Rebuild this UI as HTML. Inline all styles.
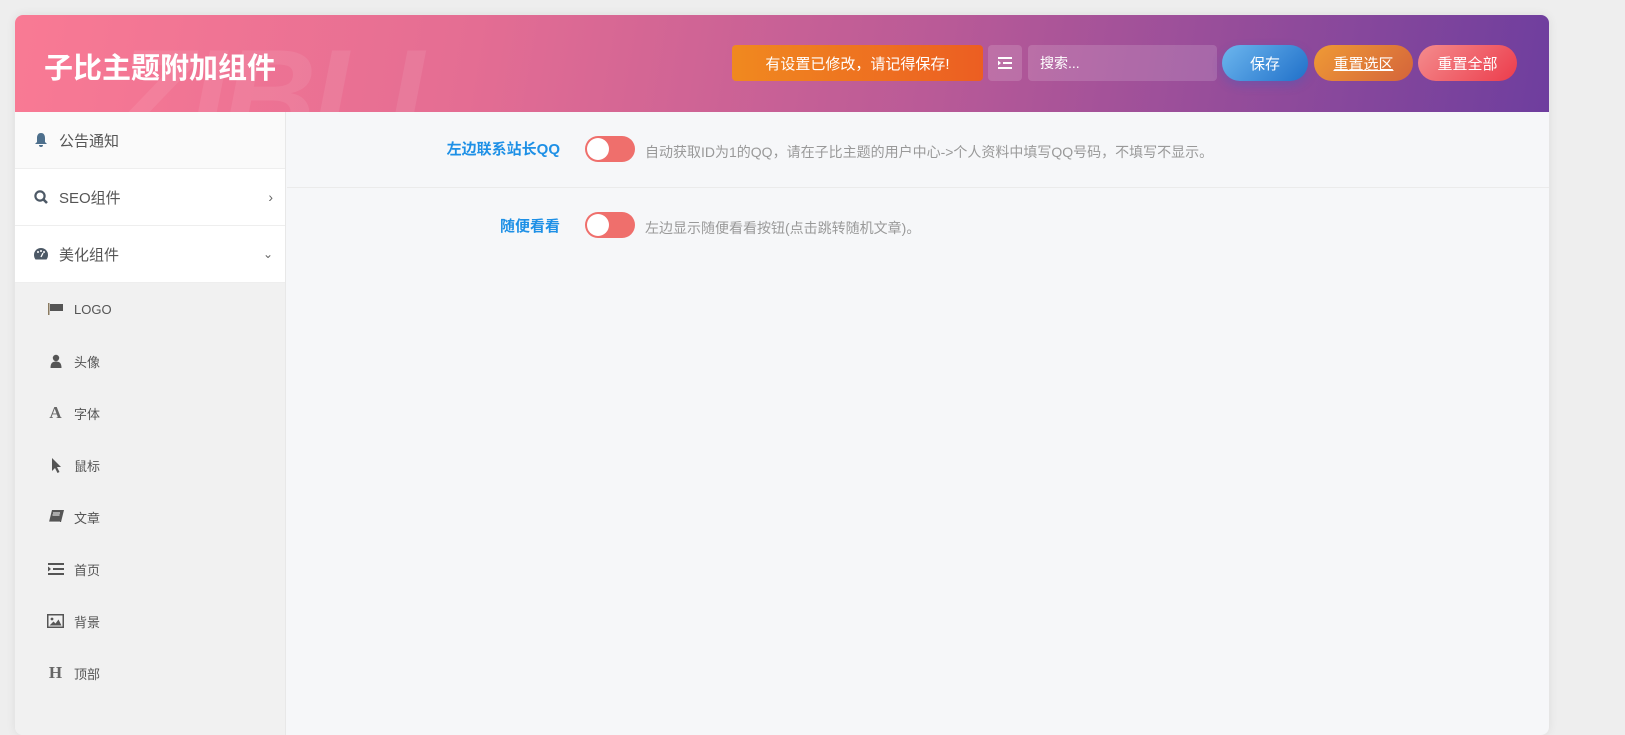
<!DOCTYPE html>
<html><head><meta charset="utf-8"><style>
*{box-sizing:border-box;margin:0;padding:0}
body{width:1625px;height:724px;background:#eeeeee;font-family:"Liberation Sans","Noto Sans CJK SC",sans-serif;overflow:hidden;position:relative}
.wrap{position:absolute;left:15px;top:15px;width:1534px;height:720px;border-radius:8px;overflow:hidden;background:#f6f7f9;box-shadow:0 0 10px rgba(0,0,0,.08)}
.hd{position:absolute;left:0;top:0;width:1534px;height:97px;background:linear-gradient(100deg,#f97a94 0%,#e46d93 30%,#b95a97 60%,#6e3e9e 100%);overflow:hidden}
.hd h1{position:absolute;left:29px;top:30px;color:#fff;font-size:29px;font-weight:bold;letter-spacing:0}
.wm{position:absolute;left:100px;top:5px;font-size:130px;font-weight:900;font-style:italic;color:rgba(255,255,255,.08);letter-spacing:-4px;font-family:"Liberation Sans",sans-serif}
.b{position:absolute;top:30px;height:36px;color:#fff;font-size:15px;display:flex;align-items:center;justify-content:center}
.side{position:absolute;left:0;top:97px;width:271px;height:630px;background:#f1f1f1;border-right:1px solid #e8e8e8}
.it{height:57px;display:flex;align-items:center;padding-left:18px;font-size:15px;color:#555;border-bottom:1px solid #eee;background:#fff;position:relative}
.it svg{margin-right:10px}
.sub{height:52px;display:flex;align-items:center;padding-left:32px;font-size:13px;color:#555}
.sub .ic{width:17px;margin-right:10px;display:flex;justify-content:center;color:#666}
.lab{position:absolute;right:989px;font-size:15px;font-weight:bold;color:#1e90e6}
.tg{position:absolute;left:570px;width:50px;height:26px;border-radius:13px;background:#ef6f6c}
.tg i{position:absolute;left:2px;top:2px;width:22px;height:22px;border-radius:50%;background:#fff}
.ds{position:absolute;left:630px;font-size:14px;color:#999}
</style></head><body>
<div class="wrap">
<div class="hd"><div class="wm">ZIBLL</div><h1>子比主题附加组件</h1>
<div class="b" style="left:717px;width:251px;background:linear-gradient(90deg,#f0891f,#ec5e22);border-radius:4px">有设置已修改，请记得保存!</div>
<div class="b" style="left:973px;width:34px;background:rgba(255,255,255,.15);border-radius:4px"><svg width="14" height="12"><rect x="0" y="0" width="14" height="2" fill="#fff"/><rect x="5" y="5" width="9" height="2" fill="#fff"/><rect x="0" y="10" width="14" height="2" fill="#fff"/><path d="M0 3.5L3 6 0 8.5z" fill="#fff"/></svg></div>
<div class="b" style="left:1013px;width:189px;background:rgba(255,255,255,.15);border-radius:4px;justify-content:flex-start;padding-left:12px;font-size:14px">搜索...</div>
<div class="b" style="left:1207px;width:86px;border-radius:18px;background:linear-gradient(135deg,#6cb6ee,#2070c9);box-shadow:0 4px 10px rgba(40,100,200,.3)">保存</div>
<div class="b" style="left:1299px;width:99px;border-radius:18px;background:linear-gradient(135deg,#ef9a35,#d4643b);text-decoration:underline">重置选区</div>
<div class="b" style="left:1403px;width:99px;border-radius:18px;background:linear-gradient(135deg,#f48c8d,#ec3c4c)">重置全部</div>
</div>
<div class="side">
<div class="it" style="background:#fafafa"><svg width="16" height="16" viewBox="0 0 16 16"><path d="M8 1c-3 0-4 2.5-4 5v4l-2 2h12l-2-2V6c0-2.5-1-5-4-5zM6 13a2 2 0 004 0z" fill="#4d6f8c"/></svg>公告通知</div>
<div class="it"><svg width="16" height="16" viewBox="0 0 16 16"><circle cx="7" cy="7" r="4.6" stroke="#4d5966" stroke-width="2.2" fill="none"/><path d="M10.5 10.5L14 14" stroke="#4d5966" stroke-width="2.6"/></svg>SEO组件<span style="position:absolute;right:12px;font-size:14px;color:#666">›</span></div>
<div class="it"><svg width="16" height="16" viewBox="0 0 16 16"><path d="M8 2a7 7 0 00-7 7c0 2 .7 3.5 1.5 4.5h11C14.3 12.5 15 11 15 9a7 7 0 00-7-7z" fill="#4d5966"/><circle cx="5" cy="6" r="1" fill="#fff"/><circle cx="8" cy="5" r="1" fill="#fff"/><circle cx="11" cy="6" r="1" fill="#fff"/><path d="M8 11l2-4" stroke="#fff" stroke-width="1.3"/></svg>美化组件<span style="position:absolute;right:12px;font-size:12px;color:#666">⌄</span></div>
<div class="sub"><span class="ic"><svg width="16" height="12"><rect x="0" y="0" width="1.5" height="12" fill="#8a7a60"/><path d="M2 1h13v7H2z" fill="#555"/></svg></span>LOGO</div>
<div class="sub"><span class="ic"><svg width="12" height="14"><circle cx="6" cy="4" r="3.2" fill="#555"/><path d="M0.5 14c0-5 2-6.5 5.5-6.5s5.5 1.5 5.5 6.5z" fill="#555"/></svg></span>头像</div>
<div class="sub"><span class="ic" style="font-family:'Liberation Serif',serif;font-weight:bold;font-size:17px">A</span>字体</div>
<div class="sub"><span class="ic"><svg width="10" height="15"><path d="M1 0v13l3-3 2.5 5 2-1-2.5-5H10z" fill="#555"/></svg></span>鼠标</div>
<div class="sub"><span class="ic"><svg width="16" height="14"><path d="M4 0h12l-3 12H1z" fill="#555"/><path d="M5 3h7M4.5 5h7" stroke="#fff"/><path d="M1 12h11" stroke="#fff" stroke-width=".8"/></svg></span>文章</div>
<div class="sub"><span class="ic"><svg width="16" height="12"><rect x="0" y="0" width="16" height="2" fill="#555"/><rect x="5" y="5" width="11" height="2" fill="#555"/><rect x="0" y="10" width="16" height="2" fill="#555"/><path d="M0 3.5L3 6 0 8.5z" fill="#555"/></svg></span>首页</div>
<div class="sub"><span class="ic"><svg width="17" height="14"><rect x=".75" y=".75" width="15.5" height="12.5" fill="none" stroke="#555" stroke-width="1.5"/><circle cx="5" cy="5" r="1.4" fill="#555"/><path d="M2.5 11.5l4-4 2 2 3-4 3 6z" fill="#555"/></svg></span>背景</div>
<div class="sub"><span class="ic" style="font-family:'Liberation Serif',serif;font-weight:bold;font-size:17px">H</span>顶部</div>
</div>
<div style="position:absolute;left:272px;top:172px;width:1262px;height:1px;background:#ebebeb"></div>
<div class="lab" style="top:123px">左边联系站长QQ</div>
<div class="tg" style="top:121px"><i></i></div>
<div class="ds" style="top:127px">自动获取ID为1的QQ，请在子比主题的用户中心->个人资料中填写QQ号码，不填写不显示。</div>
<div class="lab" style="top:200px">随便看看</div>
<div class="tg" style="top:197px"><i></i></div>
<div class="ds" style="top:203px">左边显示随便看看按钮(点击跳转随机文章)。</div>
</div>
</body></html>
